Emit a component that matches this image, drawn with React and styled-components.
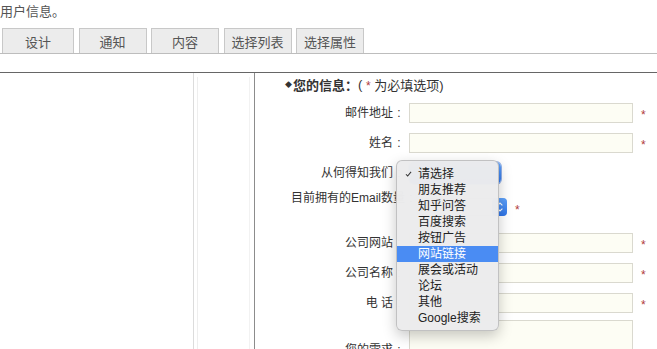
import React from 'react'
import styled, { createGlobalStyle } from 'styled-components'

const GlobalStyle = createGlobalStyle`
    html, body {
        margin: 0;
        padding: 0;
        background: #fff;
    }
    body {
        font-family: "Liberation Sans", "Noto Sans CJK SC", sans-serif;
        color: #333;
    }
`

const tabs = [
    { name: '设计', width: 72 },
    { name: '通知', width: 68 },
    { name: '内容', width: 68 },
    { name: '选择列表', width: 68 },
    { name: '选择属性', width: 68 },
]

const sources = ['请选择', '朋友推荐', '知乎问答', '百度搜索', '按钮广告', '网站链接', '展会或活动', '论坛', '其他', 'Google搜索']

function App() {
    return (
        <Page>
            <GlobalStyle />
            <Intro>用户信息。</Intro>
            <TabBar>
                {tabs.map(t => (
                    <Tab key={t.name} $w={t.width}>{t.name}</Tab>
                ))}
            </TabBar>
            <Panel>
                <SidePane />
                <Gutter>
                    <GutterInner />
                </Gutter>
                <Form>
                    <Heading>
                        <Diamond>◆</Diamond>
                        <b>您的信息：</b>( <Req $inline>*</Req> 为必填选项)
                    </Heading>
                    <Rows>
                        <Row>
                            <Label>邮件地址<Colon>:</Colon></Label>
                            <TextInput />
                            <Req>*</Req>
                        </Row>
                        <Row>
                            <Label>姓名<Colon>:</Colon></Label>
                            <TextInput />
                            <Req>*</Req>
                        </Row>
                        <Row>
                            <Label>从何得知我们<Colon>:</Colon></Label>
                            <SelectWrap>
                                <OpenSelect />
                                <Menu>
                                    {sources.map((s, i) => (
                                        <MenuItem key={s} $active={s === '网站链接'}>
                                            {i === 0 && (
                                                <Check viewBox="0 0 8 7">
                                                    <polyline points="1,3.8 3,5.8 7,1" />
                                                </Check>
                                            )}
                                            {s}
                                        </MenuItem>
                                    ))}
                                </Menu>
                            </SelectWrap>
                        </Row>
                        <Row $h={40}>
                            <Label $top>目前拥有的Email数量<Colon>:</Colon></Label>
                            <Select>
                                <SelectArrow>
                                    <svg viewBox="0 0 10 14" width="8" height="12">
                                        <polyline points="2,5 5,2 8,5" />
                                        <polyline points="2,9 5,12 8,9" />
                                    </svg>
                                </SelectArrow>
                            </Select>
                            <Req>*</Req>
                        </Row>
                        <Row>
                            <Label>公司网站<Colon>:</Colon></Label>
                            <TextInput />
                            <Req>*</Req>
                        </Row>
                        <Row>
                            <Label>公司名称<Colon>:</Colon></Label>
                            <TextInput />
                            <Req>*</Req>
                        </Row>
                        <Row>
                            <Label>电 话<Colon>:</Colon></Label>
                            <TextInput />
                            <Req>*</Req>
                        </Row>
                        <Row $h={64}>
                            <Label>您的需求<Colon>:</Colon></Label>
                            <TextArea />
                        </Row>
                    </Rows>
                </Form>
            </Panel>
        </Page>
    )
}

export default App

const Page = styled.div`
    width: 100%;
    height: 100vh;
    overflow: hidden;
    display: flex;
    flex-direction: column;
`
const Intro = styled.div`
    height: 24px;
    line-height: 24px;
    font-size: 13px;
    color: #555;
`
const TabBar = styled.div`
    margin-top: 4px;
    height: 25px;
    display: flex;
    gap: 4px;
    padding-left: 2px;
    border-bottom: 1px solid #bdbdbd;
`
const Tab = styled.div`
    box-sizing: border-box;
    width: ${p => p.$w}px;
    height: 25px;
    border: 1px solid #c8c8c8;
    border-bottom: none;
    background: #ececec;
    color: #555;
    font-size: 13px;
    display: flex;
    align-items: center;
    justify-content: center;
    & + & {
        margin-left: 0.5px;
    }
`
const Panel = styled.div`
    margin-top: 18px;
    border-top: 1px solid #666;
    flex: 1;
    display: flex;
`
const SidePane = styled.div`
    box-sizing: border-box;
    width: 194px;
    border-right: 1px solid #dcdcdc;
`
const Gutter = styled.div`
    box-sizing: border-box;
    width: 61px;
    border-right: 1px solid #8c8c8c;
    padding: 4px 4px 0 3px;
`
const GutterInner = styled.div`
    height: 100%;
    border-left: 1px solid #eeeeee;
    border-right: 1px solid #f2f2f2;
`
const Form = styled.div`
    flex: 1;
    padding-left: 30px;
`
const Heading = styled.div`
    height: 22px;
    display: flex;
    align-items: center;
    font-size: 13px;
    color: #333;
    white-space: pre;
    b {
        font-weight: bold;
    }
`
const Diamond = styled.span`
    font-size: 7px;
    margin-right: 1px;
`
const Rows = styled.div`
    margin-top: 3px;
    padding-left: 6px;
`
const Row = styled.div`
    display: flex;
    align-items: center;
    height: ${p => p.$h || 30}px;
    font-size: 12px;
`
const Label = styled.div`
    min-width: 114px;
    flex-shrink: 0;
    text-align: right;
    white-space: nowrap;
    line-height: 18px;
    color: #333;
    align-self: ${p => (p.$top ? 'flex-start' : 'auto')};
    margin-top: ${p => (p.$top ? 1 : 0)}px;
`
const Colon = styled.span`
    display: inline-block;
    width: 12px;
    text-align: center;
`
const TextInput = styled.div`
    box-sizing: border-box;
    margin-left: 4px;
    width: 224px;
    height: 20px;
    background: #fdfdf4;
    border: 1px solid #dad9cf;
`
const TextArea = styled.div`
    box-sizing: border-box;
    margin: 2px 0 0 4px;
    align-self: flex-start;
    width: 224px;
    height: 62px;
    background: #fdfdf4;
    border: 1px solid #dad9cf;
`
const Req = styled.span`
    color: #b03a3a;
    font-size: 12px;
    margin-left: ${p => (p.$inline ? 0 : 8)}px;
    line-height: 12px;
    padding-top: 3px;
`
const SelectWrap = styled.div`
    position: relative;
    margin-left: 4px;
`
const OpenSelect = styled.div`
    width: 92px;
    height: 22px;
    border-radius: 5px;
    background: linear-gradient(#61a4fb, #2f76ea);
    box-shadow: 0 0 0 1px rgba(40, 100, 210, 0.5);
`
const Menu = styled.div`
    position: absolute;
    left: -13px;
    top: -2px;
    width: 103px;
    box-sizing: border-box;
    padding: 5px 0 4px;
    background: rgba(236, 236, 237, 0.98);
    border: 0.5px solid rgba(0, 0, 0, 0.18);
    border-radius: 6px;
    box-shadow: 0 5px 14px rgba(0, 0, 0, 0.22);
    z-index: 10;
`
const MenuItem = styled.div`
    position: relative;
    height: 16px;
    line-height: 16px;
    padding-left: 21px;
    font-size: 12px;
    color: ${p => (p.$active ? '#fff' : '#222')};
    background: ${p => (p.$active ? '#4a8cf3' : 'transparent')};
    white-space: nowrap;
`
const Check = styled.svg`
    position: absolute;
    left: 8px;
    top: 5px;
    width: 7px;
    height: 6px;
    fill: none;
    stroke: #333;
    stroke-width: 1.2;
`
const Select = styled.div`
    box-sizing: border-box;
    margin: 10px 0 0 4px;
    align-self: flex-start;
    width: 86px;
    height: 18px;
    border: 1px solid #c4c4c4;
    border-radius: 4px;
    background: #fff;
    display: flex;
    justify-content: flex-end;
`
const SelectArrow = styled.div`
    width: 15px;
    height: 18px;
    margin: -1px -1px 0 0;
    border-radius: 4px;
    background: linear-gradient(#5ea2fb, #2e74e8);
    display: flex;
    align-items: center;
    justify-content: center;
    svg {
        fill: none;
        stroke: #fff;
        stroke-width: 1.4;
    }
`
